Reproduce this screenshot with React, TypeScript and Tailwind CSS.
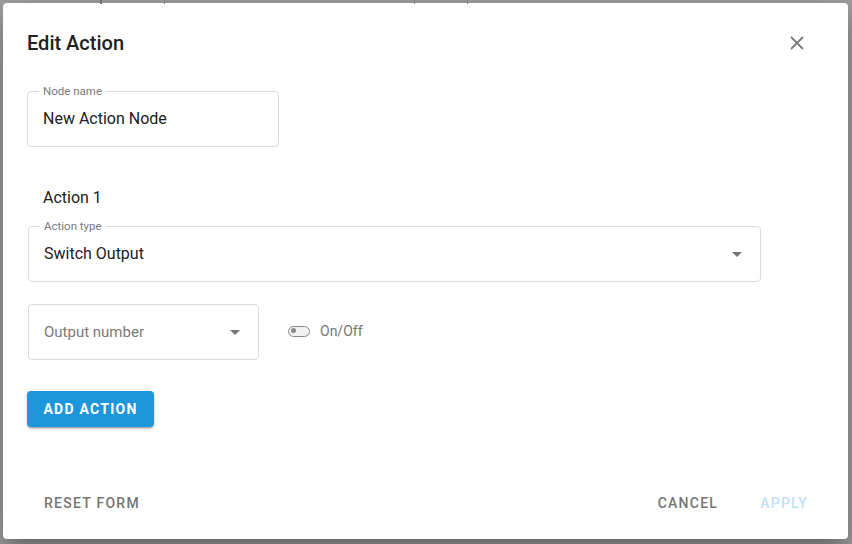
import React from 'react';

const ArrowDown = () => (
  <svg width="10" height="5" viewBox="0 0 10 5" className="text-[#757575]">
    <path d="M0 0L5 5L10 0Z" fill="currentColor" />
  </svg>
);

function OutlinedField({
  label,
  value,
  className,
  select,
}: {
  label?: string;
  value: string;
  className: string;
  select?: boolean;
}) {
  return (
    <div className={`relative h-[56px] rounded-[4px] border border-[#dadada] flex items-center px-[15px] ${className}`}>
      {label && (
        <span className="absolute left-[11px] -top-[8px] bg-white px-[4px] text-[11.5px] leading-[14px] text-[#7a7a7a]">
          {label}
        </span>
      )}
      <span className="flex-1 text-[16px] text-[#212121]">{value}</span>
      {select && (
        <span className="mr-[3px]">
          <ArrowDown />
        </span>
      )}
    </div>
  );
}

export default function App() {
  return (
    <div className="w-[852px] h-[544px] bg-[#a0a0a0] overflow-hidden relative font-['Roboto',sans-serif]">
      {/* faint content behind the overlay */}
      <div className="absolute top-0 left-[100px] w-[2px] h-[4px] bg-[#707070]" />
      <div className="absolute top-0 left-[164px] w-[1px] h-[4px] bg-[#808080]" />
      <div className="absolute top-0 left-[414px] w-[1px] h-[4px] bg-[#808080]" />
      <div className="absolute top-0 left-[467px] w-[1px] h-[4px] bg-[#808080]" />

      <div className="p-[3px] pr-[4px] h-full">
        <div className="bg-white rounded-[4px] h-[536px] flex flex-col shadow-[0_11px_15px_-7px_rgba(0,0,0,0.2),0_24px_38px_3px_rgba(0,0,0,0.14),0_9px_46px_8px_rgba(0,0,0,0.12)]">
          {/* Title */}
          <div className="flex items-center justify-between pl-[24px] pr-[44px] pt-[24px] h-[56px]">
            <h2 className="text-[20px] leading-[32px] font-medium text-[#212121]">Edit Action</h2>
            <svg width="14" height="14" viewBox="0 0 14 14" className="text-[#7a7a7a]">
              <path d="M1 1L13 13M13 1L1 13" stroke="currentColor" strokeWidth="1.8" />
            </svg>
          </div>

          {/* Body */}
          <div className="flex flex-col pl-[24px] pt-[32px]">
            <OutlinedField label="Node name" value="New Action Node" className="w-[252px]" />

            <div className="pl-[16px] mt-[39px] text-[16px] leading-[24px] text-[#212121]">Action 1</div>

            <OutlinedField
              label="Action type"
              value="Switch Output"
              select
              className="w-[733px] ml-[1px] mt-[16px]"
            />

            <div className="flex items-center mt-[22px] ml-[1px]">
              <div className="h-[56px] w-[231px] rounded-[4px] border border-[#dadada] flex items-center px-[15px]">
                <span className="flex-1 text-[15px] text-[#7a7a7a]">Output number</span>
                <span className="mr-[3px]">
                  <ArrowDown />
                </span>
              </div>
              <div className="flex items-center ml-[29px] mb-[2px]">
                <div className="relative w-[22px] h-[11px] rounded-full border-[1.5px] border-[#8a8a8a] bg-[#f2f2f2]">
                  <div className="absolute left-[2px] top-[1.5px] w-[5px] h-[5px] rounded-full bg-[#8a8a8a]" />
                </div>
                <span className="ml-[10px] text-[14px] text-[#757575]">On/Off</span>
              </div>
            </div>

            <button className="mt-[31px] w-[127px] h-[36px] rounded-[4px] bg-[#1e96dc] text-white text-[14px] font-bold tracking-[0.09em] shadow-[0_3px_1px_-2px_rgba(0,0,0,0.2),0_2px_2px_0_rgba(0,0,0,0.14),0_1px_5px_0_rgba(0,0,0,0.12)]">
              ADD ACTION
            </button>
          </div>

          <div className="flex-1" />

          {/* Actions */}
          <div className="flex items-center pl-[33px] pr-[32px] h-[36px] mb-[18px]">
            <button className="px-[8px] h-[36px] text-[14px] font-medium tracking-[0.09em] text-[#757575]">
              RESET FORM
            </button>
            <div className="flex-1" />
            <button className="px-[8px] h-[36px] text-[14px] font-medium tracking-[0.09em] text-[#757575]">
              CANCEL
            </button>
            <button className="ml-[26px] px-[8px] h-[36px] text-[14px] font-medium tracking-[0.09em] text-[#bfe2f7]">
              APPLY
            </button>
          </div>
        </div>
      </div>
    </div>
  );
}
